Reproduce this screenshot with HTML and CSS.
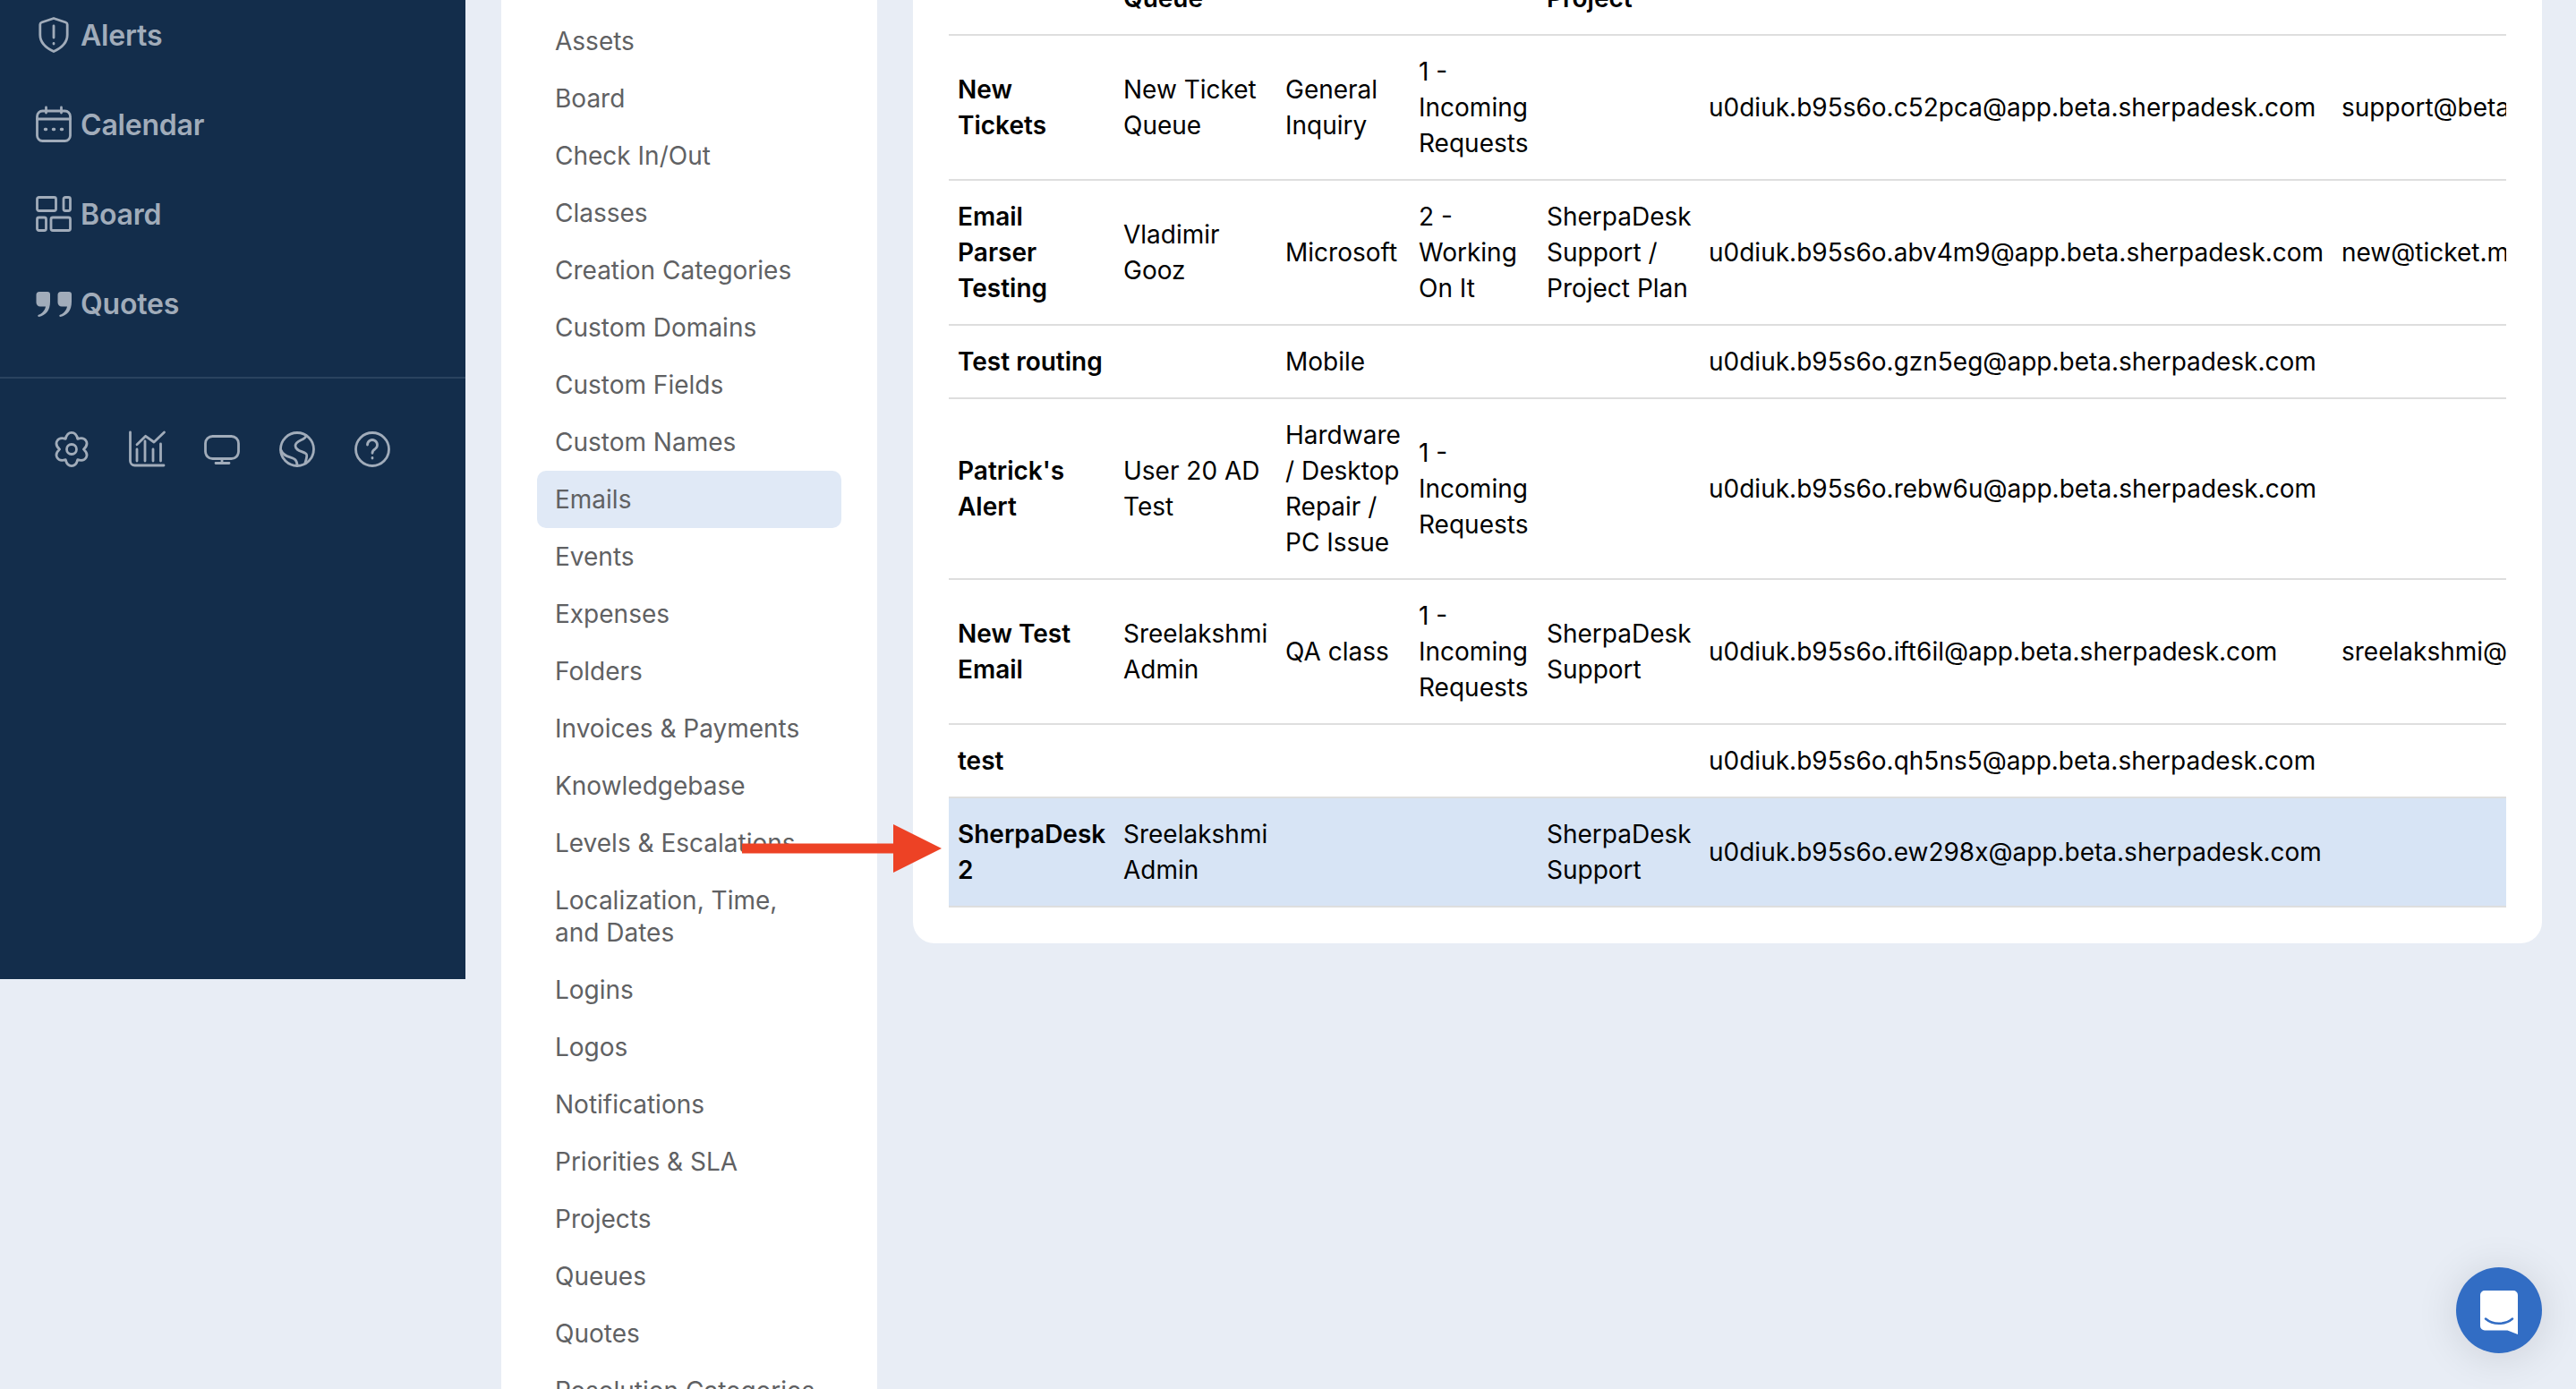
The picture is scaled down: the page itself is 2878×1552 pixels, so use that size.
FILE: index.html
```html
<!DOCTYPE html>
<html lang="en">
<head>
<meta charset="utf-8">
<title>Emails</title>
<link rel="stylesheet" href="styles.css">
</head>
<body>
<div class="page">
  <aside class="sidebar">
    <nav class="nav">
      <a class="nav-item">
        <svg class="ico" viewBox="0 0 40 40"><path d="M20 1.500 33.500 6a2.500 2.500 0 0 1 1.700 2.400V20c0 9-6.500 14.500-15.200 18.500C11.300 34.500 4.800 29 4.800 20V8.400A2.500 2.500 0 0 1 6.500 6z"/><path d="M20 10v13"/><path d="M20 29.500v.5"/></svg>
        <span>Alerts</span>
      </a>
      <a class="nav-item">
        <svg class="ico" viewBox="0 0 40 40"><rect x="1.500" y="5" width="37" height="33.500" rx="6"/><path d="M11.500 1v6M28.500 1v6M1.500 14h37"/><path class="dots" d="M10.500 25.500h1M19.500 25.500h1M28.500 25.500h1"/></svg>
        <span>Calendar</span>
      </a>
      <a class="nav-item">
        <svg class="ico" viewBox="0 0 40 40"><rect x="1.500" y="1.500" width="21" height="15" rx="2"/><rect x="31" y="1.500" width="7.500" height="15" rx="2"/><rect x="1.500" y="24" width="10" height="14.500" rx="2"/><rect x="17" y="24" width="21.500" height="14.500" rx="2"/></svg>
        <span>Board</span>
      </a>
      <a class="nav-item">
        <svg class="ico ico-fill" viewBox="0 0 40 40"><path d="M4 7H13A3 3 0 0 1 16 10V18C16 28 11 33.500 3.500 35A1.200 1.200 0 0 1 3 32.700C7 31.500 10 28 11 23.500H5C2.500 23.500.5 21.500.5 19V10.500A3.500 3.500 0 0 1 4 7z"/><path d="M28 7H37A3 3 0 0 1 40 10V18C40 28 35 33.500 27.500 35A1.200 1.200 0 0 1 27 32.700C31 31.500 34 28 35 23.500H29C26.500 23.500 24.500 21.500 24.500 19V10.500A3.500 3.500 0 0 1 28 7z"/></svg>
        <span>Quotes</span>
      </a>
    </nav>
    <div class="tools">
      <svg class="ico" viewBox="0 0 40 40"><path d="M13.250 8.310C15.500-1 24.500-1 26.750 8.310C35.940 5.600 40.440 13.400 33.500 20C40.440 26.600 35.940 34.400 26.750 31.690C24.500 41 15.500 41 13.250 31.690C4.060 34.400-.44 26.600 6.500 20C-.44 13.400 4.060 5.600 13.250 8.310z"/><circle cx="20" cy="20" r="5.500"/></svg>
      <svg class="ico" viewBox="0 0 40 40"><path d="M1.500 1v32a5 5 0 0 0 5 5H39"/><path d="M9 20v13M18 11v22M27 20v13M35.500 14v19"/><path d="M9 14.700 18.700 5.300 28 12 39.500 1"/></svg>
      <svg class="ico" viewBox="0 0 40 40"><rect x="1.500" y="5.500" width="37" height="25" rx="8"/><path d="M13 35.500h15M20 31v4"/></svg>
      <svg class="ico" viewBox="0 0 40 40"><circle cx="20" cy="20" r="18.500"/><path d="M30 5C29 10 18 10 18 16C18 22 26 22 30 25C32 27 30 31 29 35"/><path d="M2 21C5 29 13 28 17 31C20 33 20 36 20 38.500"/></svg>
      <svg class="ico" viewBox="0 0 40 40"><circle cx="20" cy="20" r="18.500"/><path d="M14.500 15a5.500 5.500 0 1 1 8.500 4.700c-2 1.200-3 2.300-3 4.600"/><path d="M20 29.500v.5"/></svg>
    </div>
  </aside>

  <section class="panel">
    <a class="panel-item">Assets</a>
    <a class="panel-item">Board</a>
    <a class="panel-item">Check In/Out</a>
    <a class="panel-item">Classes</a>
    <a class="panel-item">Creation Categories</a>
    <a class="panel-item">Custom Domains</a>
    <a class="panel-item">Custom Fields</a>
    <a class="panel-item">Custom Names</a>
    <a class="panel-item is-active">Emails</a>
    <a class="panel-item">Events</a>
    <a class="panel-item">Expenses</a>
    <a class="panel-item">Folders</a>
    <a class="panel-item">Invoices &amp; Payments</a>
    <a class="panel-item">Knowledgebase</a>
    <a class="panel-item">Levels &amp; Escalations</a>
    <a class="panel-item">Localization, Time, and Dates</a>
    <a class="panel-item">Logins</a>
    <a class="panel-item">Logos</a>
    <a class="panel-item">Notifications</a>
    <a class="panel-item">Priorities &amp; SLA</a>
    <a class="panel-item">Projects</a>
    <a class="panel-item">Queues</a>
    <a class="panel-item">Quotes</a>
    <a class="panel-item">Resolution Categories</a>
  </section>

  <main class="card">
    <div class="table-clip">
      <table class="grid">
        <colgroup>
          <col class="c1"><col class="c2"><col class="c3"><col class="c4"><col class="c5"><col class="c6"><col class="c7">
        </colgroup>
        <thead>
          <tr><th></th><th>Queue</th><th></th><th></th><th>Project</th><th></th><th></th></tr>
        </thead>
        <tbody>
          <tr>
            <td class="name">New Tickets</td><td>New Ticket Queue</td><td>General Inquiry</td><td>1 - Incoming Requests</td><td></td>
            <td class="mono">u0diuk.b95s6o.c52pca@app.beta.sherpadesk.com</td><td class="mono">support@beta</td>
          </tr>
          <tr>
            <td class="name">Email Parser Testing</td><td>Vladimir Gooz</td><td>Microsoft</td><td>2 - Working On It</td><td>SherpaDesk Support / Project Plan</td>
            <td class="mono">u0diuk.b95s6o.abv4m9@app.beta.sherpadesk.com</td><td class="mono">new@ticket.m</td>
          </tr>
          <tr>
            <td class="name">Test routing</td><td></td><td>Mobile</td><td></td><td></td>
            <td class="mono">u0diuk.b95s6o.gzn5eg@app.beta.sherpadesk.com</td><td></td>
          </tr>
          <tr>
            <td class="name">Patrick's Alert</td><td>User 20 AD Test</td><td>Hardware / Desktop Repair / PC Issue</td><td>1 - Incoming Requests</td><td></td>
            <td class="mono">u0diuk.b95s6o.rebw6u@app.beta.sherpadesk.com</td><td></td>
          </tr>
          <tr>
            <td class="name">New Test Email</td><td>Sreelakshmi Admin</td><td>QA class</td><td>1 - Incoming Requests</td><td>SherpaDesk Support</td>
            <td class="mono">u0diuk.b95s6o.ift6il@app.beta.sherpadesk.com</td><td class="mono">sreelakshmi@</td>
          </tr>
          <tr>
            <td class="name">test</td><td></td><td></td><td></td><td></td>
            <td class="mono">u0diuk.b95s6o.qh5ns5@app.beta.sherpadesk.com</td><td></td>
          </tr>
          <tr class="is-highlight">
            <td class="name">SherpaDesk 2</td><td>Sreelakshmi Admin</td><td></td><td></td><td>SherpaDesk Support</td>
            <td class="mono">u0diuk.b95s6o.ew298x@app.beta.sherpadesk.com</td><td></td>
          </tr>
        </tbody>
      </table>
    </div>
  </main>
</div>

<svg class="arrow" viewBox="0 0 224 54"><path d="M0 21.500H169V0L223 27 169 54V32.500H0z"/></svg>

<button class="chat" aria-label="Chat">
  <svg class="chat-ico" viewBox="0 0 42 49"><path class="chat-body" d="M5 0H37a5 5 0 0 1 5 5V49L30.500 44.500H5a5 5 0 0 1-5-5V5a5 5 0 0 1 5-5z"/><path class="chat-smile" d="M6 31.500C14 38.500 28 38.500 36 31.500"/></svg>
</button>
</body>
</html>
```

FILE: styles.css
```css
* { box-sizing: border-box; }

html, body {
  margin: 0;
  height: 100%;
  overflow: hidden;
  background: #e8edf5;
  font-family: Inter, "Noto Sans", sans-serif;
}

.page {
  display: flex;
  align-items: flex-start;
  gap: 40px;
  height: 1552px;
  overflow: hidden;
}

/* dark sidebar */
.sidebar {
  flex: 0 0 520px;
  height: 1094px;
  background: #132d4b;
  color: #a1acba;
}

.nav {
  margin-top: -11px;
  padding-bottom: 32px;
  border-bottom: 2px solid #2a435f;
}

.nav-item {
  display: flex;
  align-items: center;
  gap: 10px;
  height: 100px;
  padding-left: 40px;
  font-size: 32px;
  font-weight: 600;
  letter-spacing: -.2px;
}

.ico {
  flex: 0 0 40px;
  width: 40px;
  height: 40px;
  fill: none;
  stroke: #a1acba;
  stroke-width: 2.800;
  stroke-linecap: round;
  stroke-linejoin: round;
  overflow: visible;
}

.ico-fill {
  fill: #a1acba;
  stroke: none;
}

.dots { stroke-width: 3.500; }

.tools {
  display: flex;
  gap: 44px;
  padding: 59px 0 0 60px;
}

/* settings list */
.panel {
  flex: 0 0 420px;
  height: 1552px;
  padding: 14px 40px 0;
  background: #fff;
  overflow: hidden;
}

.panel-item {
  display: block;
  padding: 14px 20px;
  border-radius: 10px;
  font-size: 28px;
  line-height: 36px;
  color: #606163;
}

.is-active { background: #e0e9f6; }

/* table card */
.card {
  flex: 0 0 1820px;
  min-width: 0;
  margin-top: -82px;
  padding: 40px;
  border-radius: 24px;
  background: #fff;
}

.table-clip { overflow: hidden; }

.grid {
  table-layout: fixed;
  width: 1740px;
  border-collapse: separate;
  border-spacing: 0;
  font-size: 28px;
  line-height: 40px;
  color: #000;
}

.c1 { width: 185px; }
.c2 { width: 181px; }
.c3 { width: 149px; }
.c4 { width: 143px; }
.c5 { width: 181px; }
.c6 { width: 707px; }
.c7 { width: 194px; }

.grid th,
.grid td {
  padding: 20px 10px;
  border-bottom: 2px solid #dedede;
  text-align: left;
  vertical-align: middle;
}

.grid th,
.grid .name { font-weight: 600; }

.grid .mono { white-space: nowrap; }

.is-highlight td { background: #d7e4f5; }

/* overlays */
.arrow {
  position: absolute;
  left: 829px;
  top: 921px;
  width: 224px;
  height: 54px;
  fill: #ed4225;
}

.chat {
  position: absolute;
  left: 2744px;
  top: 1416px;
  display: flex;
  align-items: center;
  justify-content: center;
  width: 96px;
  height: 96px;
  padding: 4px 0 0;
  border: 0;
  border-radius: 50%;
  background: #326dc4;
  box-shadow: 0 4px 48px rgba(0, 0, 0, .12);
}

.chat-ico { width: 42px; height: 49px; }
.chat-body { fill: #fff; }
.chat-smile { fill: none; stroke: #326dc4; stroke-width: 2.500; stroke-linecap: round; }
```
